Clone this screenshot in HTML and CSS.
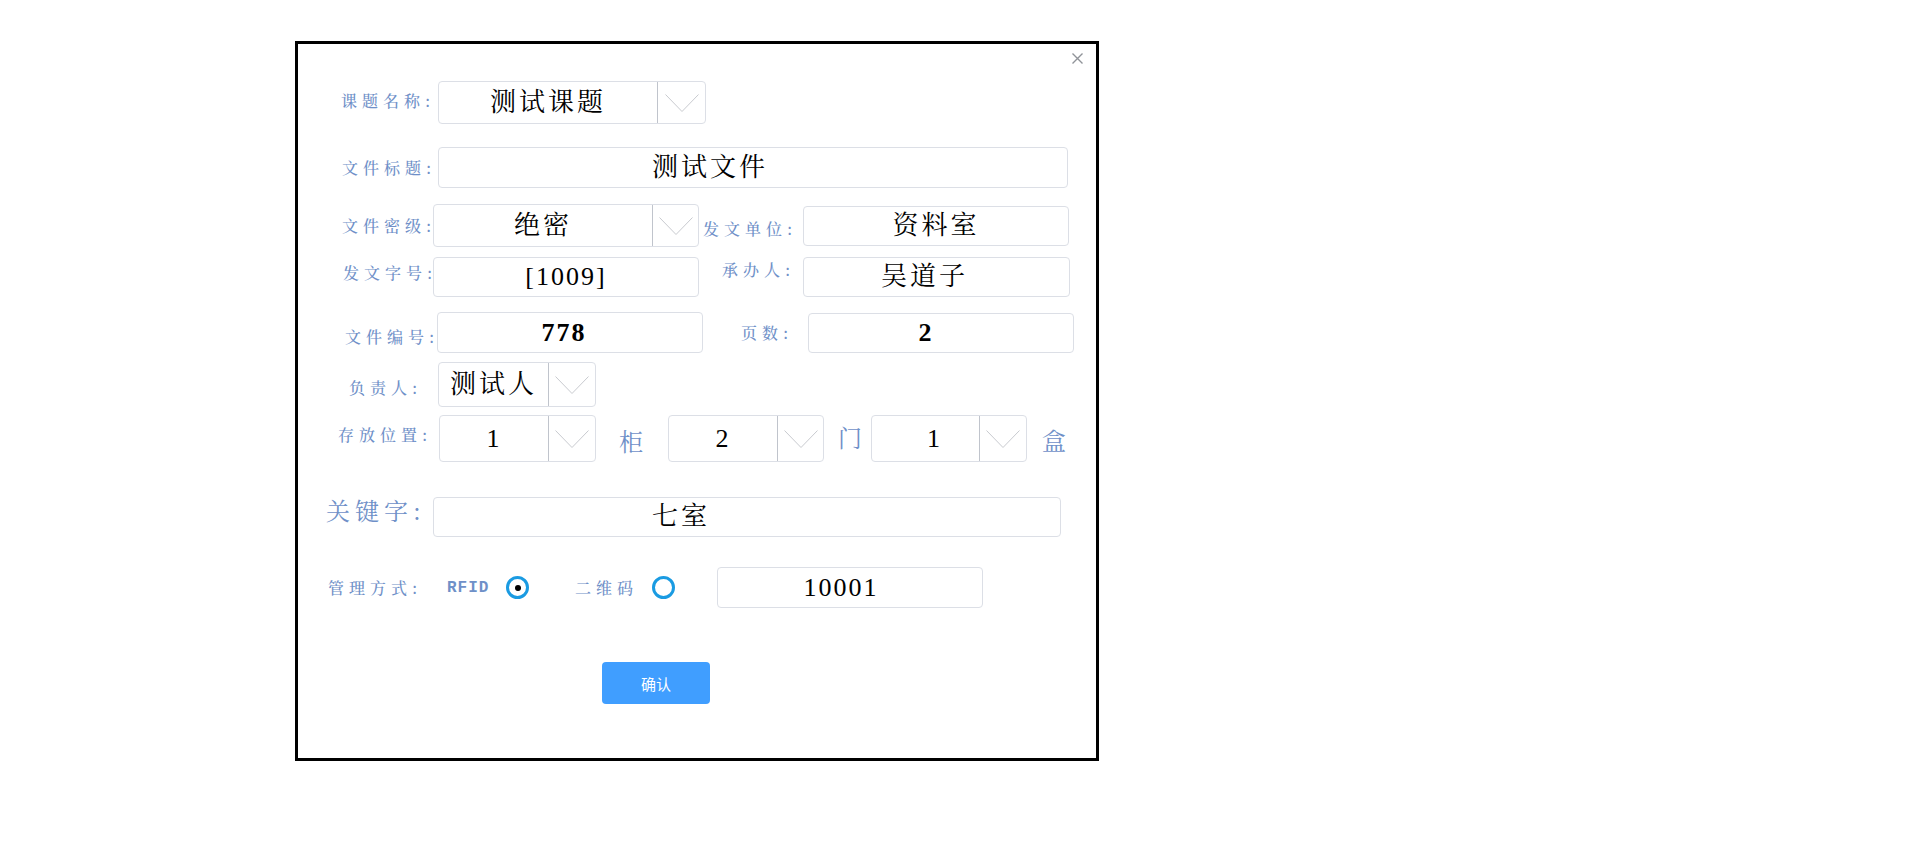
FILE: index.html
```html
<!DOCTYPE html>
<html lang="zh-CN">
<head>
<meta charset="utf-8">
<title>文件信息</title>
<link rel="stylesheet" href="styles.css">
</head>
<body>
<div class="dialog">
  <span class="close" aria-label="关闭">
    <svg width="11" height="11" viewBox="0 0 11 11"><path d="M0.5 0.5 L10.5 10.5 M10.5 0.5 L0.5 10.5" stroke="#909399" stroke-width="1.4" fill="none"/></svg>
  </span>

  <div class="row r1">
    <span class="label l1">课题名称:</span>
    <div class="select w268"><span class="val">测试课题</span><span class="arrow a48"><svg width="34" height="18" viewBox="0 0 34 18"><polyline points="0.5,0.5 17,17.5 33.5,0.5" fill="none" stroke="#c8cacf" stroke-width="1"/></svg></span></div>
  </div>

  <div class="row r2">
    <span class="label l2">文件标题:</span>
    <div class="input w630 left214"><span class="val">测试文件</span></div>
  </div>

  <div class="row r3">
    <span class="label l3">文件密级:</span>
    <div class="select w266"><span class="val">绝密</span><span class="arrow a46"><svg width="34" height="18" viewBox="0 0 34 18"><polyline points="0.5,0.5 17,17.5 33.5,0.5" fill="none" stroke="#c8cacf" stroke-width="1"/></svg></span></div>
    <span class="label l3b">发文单位:</span>
    <div class="input w266 h40"><span class="val">资料室</span></div>
  </div>

  <div class="row r4">
    <span class="label l4">发文字号:</span>
    <div class="input w266"><span class="val num">[1009]</span></div>
    <span class="label l4b">承办人:</span>
    <div class="input w267 shiftl24"><span class="val">吴道子</span></div>
  </div>

  <div class="row r5">
    <span class="label l5">文件编号:</span>
    <div class="input w266 shiftl12"><span class="val num bold">778</span></div>
    <span class="label l5b">页数:</span>
    <div class="input w266 h40 shiftl30"><span class="val num bold">2</span></div>
  </div>

  <div class="row r6">
    <span class="label l6">负责人:</span>
    <div class="select w158"><span class="val">测试人</span><span class="arrow a47"><svg width="34" height="18" viewBox="0 0 34 18"><polyline points="0.5,0.5 17,17.5 33.5,0.5" fill="none" stroke="#c8cacf" stroke-width="1"/></svg></span></div>
  </div>

  <div class="row r7">
    <span class="label l7">存放位置:</span>
    <div class="select w157"><span class="val num">1</span><span class="arrow a47"><svg width="34" height="18" viewBox="0 0 34 18"><polyline points="0.5,0.5 17,17.5 33.5,0.5" fill="none" stroke="#c8cacf" stroke-width="1"/></svg></span></div>
    <span class="unit u1">柜</span>
    <div class="select w156"><span class="val num">2</span><span class="arrow a46"><svg width="34" height="18" viewBox="0 0 34 18"><polyline points="0.5,0.5 17,17.5 33.5,0.5" fill="none" stroke="#c8cacf" stroke-width="1"/></svg></span></div>
    <span class="unit u2">门</span>
    <div class="select w156"><span class="val num shiftr">1</span><span class="arrow a47"><svg width="34" height="18" viewBox="0 0 34 18"><polyline points="0.5,0.5 17,17.5 33.5,0.5" fill="none" stroke="#c8cacf" stroke-width="1"/></svg></span></div>
    <span class="unit u3">盒</span>
  </div>

  <div class="row r8">
    <span class="label big l8">关键字:</span>
    <div class="input w628 left219"><span class="val">七室</span></div>
  </div>

  <div class="row r9">
    <span class="label l9">管理方式:</span>
    <span class="label latin">RFID</span>
    <span class="radio checked"></span>
    <span class="label l9b">二维码</span>
    <span class="radio"></span>
    <div class="input w266 in9 shiftl18"><span class="val num">10001</span></div>
  </div>

  <div class="actions">
    <button class="btn" type="button">确认</button>
  </div>
</div>
</body>
</html>
```

FILE: styles.css
```css
* { box-sizing: border-box; }

html, body {
  margin: 0;
  padding: 0;
  background: #ffffff;
}

body {
  font-family: "Noto Serif CJK SC", "Noto Sans CJK SC", "Liberation Serif", serif;
  width: 1914px;
  height: 857px;
  overflow: hidden;
}

.dialog {
  position: relative;
  margin: 41px 0 0 295px;
  width: 804px;
  height: 720px;
  border: 3px solid #000;
  background: #fff;
  padding-top: 37px;
  display: flex;
  flex-direction: column;
}

.close {
  position: absolute;
  left: 774px;
  top: 9px;
  width: 11px;
  height: 11px;
  display: block;
  line-height: 0;
}

.row {
  display: flex;
  align-items: center;
  flex: none;
}

.r1 { height: 43px; }
.r2 { height: 41px; margin-top: 23px; }
.r3 { height: 43px; margin-top: 16px; }
.r4 { height: 40px; margin-top: 10px; }
.r5 { height: 41px; margin-top: 15px; }
.r6 { height: 45px; margin-top: 9px; }
.r7 { height: 47px; margin-top: 8px; }
.r8 { height: 40px; margin-top: 35px; }
.r9 { height: 41px; margin-top: 30px; }

.label {
  flex: none;
  color: #6f90c8;
  font-size: 16px;
  font-weight: 500;
  letter-spacing: 5px;
  line-height: 20px;
  white-space: nowrap;
}

.label.big {
  font-size: 24px;
  font-weight: 400;
  letter-spacing: 5px;
  line-height: 28px;
}

.label.latin {
  font-family: "Liberation Mono", monospace;
  font-weight: bold;
  letter-spacing: 1px;
}

/* label placement: margin-left = gap before, width = room up to next control */
.l1 { margin-left: 43px; width: 97px; margin-bottom: 3px; }
.l2 { margin-left: 44px; width: 96px; }
.l3 { margin-left: 44px; width: 91px; }
.l3b { margin-left: 4px; width: 100px; margin-top: 6px; }
.l4 { margin-left: 45px; width: 90px; margin-bottom: 8px; }
.l4b { margin-left: 23px; width: 81px; margin-bottom: 14px; }
.l5 { margin-left: 47px; width: 92px; margin-top: 9px; }
.l5b { margin-left: 38px; width: 67px; }
.l6 { margin-left: 51px; width: 89px; margin-top: 7px; }
.l7 { margin-left: 40px; width: 101px; margin-bottom: 7px; }
.l8 { margin-left: 28px; width: 107px; margin-bottom: 14px; }
.l9 { margin-left: 30px; width: 119px; }
.latin { width: 59px; }
.l9b { margin-left: 46px; width: 77px; }

.unit {
  flex: none;
  color: #6f90c8;
  font-size: 24px;
  line-height: 28px;
}
.u1 { margin-left: 23px; width: 49px; margin-top: 5px; }
.u2 { margin-left: 14px; width: 33px; margin-bottom: 4px; }
.u3 { margin-left: 15px; margin-top: 2px; }

.input, .select {
  flex: none;
  height: 100%;
  border: 1px solid #dcdfe6;
  border-radius: 4px;
  background: #fff;
  display: flex;
  align-items: center;
}

.h40 { height: 40px; }

.w156 { width: 156px; }
.w157 { width: 157px; }
.w158 { width: 158px; }
.w266 { width: 266px; }
.w267 { width: 267px; }
.w268 { width: 268px; }
.w628 { width: 628px; }
.w630 { width: 630px; }

.val {
  flex: 1;
  text-align: center;
  color: #000;
  font-family: "Liberation Serif", "Noto Serif CJK SC", "Noto Sans CJK SC", serif;
  font-size: 26px;
  letter-spacing: 3px;
  line-height: 30px;
  white-space: nowrap;
}

.val.num { letter-spacing: 2px; }
.val.bold { font-weight: bold; }

.left214 .val { text-align: left; padding-left: 213px; }
.left219 .val { text-align: left; padding-left: 218px; }

.shiftl24 .val { padding-right: 24px; }
.shiftl12 .val { padding-right: 12px; }
.shiftl30 .val { padding-right: 30px; }
.shiftl18 .val { padding-right: 18px; }
.val.shiftr { padding-left: 18px; }

.arrow {
  flex: none;
  height: 100%;
  border-left: 1px solid #c0c4cc;
  display: flex;
  align-items: center;
  justify-content: center;
}
.a46 { width: 46px; }
.a47 { width: 47px; }
.a48 { width: 48px; }

.radio {
  flex: none;
  width: 23px;
  height: 23px;
  border: 3px solid #1a9be2;
  border-radius: 50%;
  display: flex;
  align-items: center;
  justify-content: center;
}
.radio.checked::after {
  content: "";
  width: 6px;
  height: 6px;
  border-radius: 50%;
  background: #000;
}

.in9 { margin-left: 42px; }

.actions {
  margin-top: 54px;
  padding-left: 304px;
  display: flex;
}

.btn {
  width: 108px;
  height: 42px;
  border: none;
  border-radius: 4px;
  background: #409eff;
  color: #fff;
  font-family: "Noto Sans CJK SC", sans-serif;
  font-size: 15px;
  padding: 0;
  cursor: pointer;
}
```
